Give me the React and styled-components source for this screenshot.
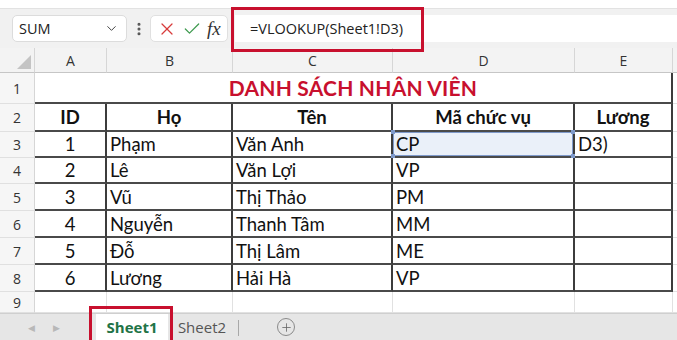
import React from 'react';
import styled, { createGlobalStyle } from 'styled-components';
import { ChevronDown, EllipsisVertical, X, Check, Plus } from 'lucide-react';

const GlobalStyle = createGlobalStyle`
  * { box-sizing: border-box; }
  body {
    margin: 0;
    background: #ffffff;
    font-family: 'Open Sans', 'Noto Sans', sans-serif;
  }
`;

const Page = styled.div`
  position: relative;
  width: 677px;
  height: 340px;
  overflow: hidden;
  background: #ffffff;
`;

const Toolbar = styled.div`
  margin-top: 8px;
  height: 40px;
  background: #f1f1f1;
  border-top: 1px solid #e2e2e2;
  display: flex;
  align-items: center;
  padding-left: 12px;
`;

const NameBox = styled.div`
  width: 115px;
  height: 27px;
  background: #fff;
  border: 1px solid #dcdcdc;
  border-radius: 5px;
  display: flex;
  align-items: center;
  justify-content: space-between;
  padding: 0 7px 0 6px;
  font-size: 14.5px;
  color: #222;
`;

const Dots = styled.div`
  width: 23px;
  display: flex;
  justify-content: center;
  color: #555;
`;

const ActionBox = styled.div`
  width: 78px;
  height: 27px;
  background: #fff;
  border: 1px solid #e0e0e0;
  border-radius: 5px;
  display: flex;
  align-items: center;
  justify-content: space-around;
  padding: 0 4px;
`;

const Fx = styled.span`
  font-family: 'Liberation Serif', 'DejaVu Serif', serif;
  font-style: italic;
  font-size: 19px;
  color: #333;
`;

const FormulaInput = styled.div`
  flex: 1;
  margin-left: 7px;
  height: 27px;
  background: #fff;
  display: flex;
  align-items: center;
  padding-left: 15px;
  font-size: 14.5px;
  color: #222;
`;

const Sheet = styled.div`
  display: grid;
  grid-template-columns: 35px 72px 126px 160px 182px 98px 1fr;
  grid-template-rows: 25px 31px 28px 26px 26px 27px 27px 27px 27px 21px;
  font-family: Lato, 'Liberation Sans', sans-serif;
`;

const Corner = styled.div`
  position: relative;
  background: #f3f3f3;
  border-right: 1px solid #d6d6d6;
  border-bottom: 1px solid #c6c6c6;
  &::after {
    content: '';
    position: absolute;
    right: 3px;
    bottom: 3px;
    width: 0;
    height: 0;
    border-left: 14px solid transparent;
    border-bottom: 14px solid #c4c4c4;
  }
`;

const ColHead = styled.div`
  background: #f3f3f3;
  border-right: 1px solid #d6d6d6;
  border-bottom: 1px solid #c6c6c6;
  display: flex;
  align-items: center;
  justify-content: center;
  font-family: 'Open Sans', sans-serif;
  font-size: 14px;
  color: #333;
`;

const RowHead = styled.div`
  background: #f6f6f6;
  border-right: 1px solid #d6d6d6;
  border-bottom: 1px solid #e0e0e0;
  display: flex;
  align-items: center;
  justify-content: center;
  font-family: 'Open Sans', sans-serif;
  font-size: 14px;
  color: #333;
`;

const Cell = styled.div`
  position: relative;
  display: flex;
  align-items: center;
  justify-content: ${(p) => (p.$center ? 'center' : 'flex-start')};
  padding: 0 3px;
  font-size: ${(p) => (p.$bold ? '18.5px' : '18.5px')};
  font-weight: ${(p) => (p.$bold ? 700 : 400)};
  color: #111;
  white-space: nowrap;
  background: ${(p) => (p.$selected ? '#eaf0f9' : '#fff')};
  border-right: ${(p) => (p.$boxed ? '2px solid #3c3c3c' : '1px solid #e1e1e1')};
  border-bottom: ${(p) => (p.$boxed ? '2px solid #4a4a4a' : '1px solid #e1e1e1')};
  ${(p) => p.$selected && 'box-shadow: inset 0 0 0 1px #7f9acb;'}
`;

const Title = styled.div`
  grid-column: 2 / 7;
  display: flex;
  align-items: center;
  justify-content: center;
  font-size: 21px;
  font-weight: 700;
  color: #c8102e;
  letter-spacing: 0.2px;
  border-right: 2px solid #3c3c3c;
  border-bottom: 2px solid #4a4a4a;
`;

const Handle = styled.span`
  position: absolute;
  width: 4px;
  height: 4px;
  background: #7f9acb;
  ${(p) => (p.$top ? 'top: -2px;' : 'bottom: -2px;')}
  ${(p) => (p.$left ? 'left: -2px;' : 'right: -2px;')}
`;

const TabBar = styled.div`
  height: 27px;
  background: #e6e6e6;
  border-top: 1px solid #cfcfcf;
  display: flex;
  align-items: stretch;
`;

const Arrows = styled.div`
  width: 96px;
  display: flex;
  align-items: center;
  gap: 18px;
  padding-left: 28px;
  font-size: 9px;
  color: #b8b8b8;
`;

const Tab = styled.div`
  width: ${(p) => p.$w}px;
  display: flex;
  align-items: center;
  justify-content: center;
  background: ${(p) => (p.$active ? '#fff' : 'transparent')};
  font-size: 15px;
  font-weight: ${(p) => (p.$active ? 700 : 400)};
  color: ${(p) => (p.$active ? '#217346' : '#555')};
`;

const Separator = styled.div`
  width: 1px;
  margin: 6px 10px 4px 2px;
  background: #a8a8a8;
`;

const AddSheet = styled.div`
  margin-left: 28px;
  display: flex;
  align-items: center;
`;

const AddCircle = styled.span`
  width: 18px;
  height: 18px;
  border-radius: 50%;
  border: 1px solid #8a8a8a;
  display: flex;
  align-items: center;
  justify-content: center;
  color: #666;
`;

const Highlight = styled.div`
  position: absolute;
  border: 3px solid #c8102e;
  pointer-events: none;
`;

const rows = [
  ['1', 'Phạm', 'Văn Anh', 'CP', 'D3)'],
  ['2', 'Lê', 'Văn Lợi', 'VP', ''],
  ['3', 'Vũ', 'Thị Thảo', 'PM', ''],
  ['4', 'Nguyễn', 'Thanh Tâm', 'MM', ''],
  ['5', 'Đỗ', 'Thị Lâm', 'ME', ''],
  ['6', 'Lương', 'Hải Hà', 'VP', ''],
];

const App = () => {
  return (
    <Page>
      <GlobalStyle />
      <Toolbar>
        <NameBox>
          <span>SUM</span>
          <ChevronDown size={15} strokeWidth={1.6} color="#444" />
        </NameBox>
        <Dots>
          <EllipsisVertical size={16} strokeWidth={2.6} />
        </Dots>
        <ActionBox>
          <X size={20} strokeWidth={1.5} color="#d83b3b" />
          <Check size={20} strokeWidth={1.5} color="#3e9a4f" />
          <Fx>fx</Fx>
        </ActionBox>
        <FormulaInput>=VLOOKUP(Sheet1!D3)</FormulaInput>
      </Toolbar>

      <Sheet>
        <Corner />
        {['A', 'B', 'C', 'D', 'E'].map((c) => (
          <ColHead key={c}>{c}</ColHead>
        ))}
        <ColHead />

        <RowHead>1</RowHead>
        <Title>DANH SÁCH NHÂN VIÊN</Title>
        <Cell />

        <RowHead>2</RowHead>
        <Cell $boxed $bold $center>ID</Cell>
        <Cell $boxed $bold $center>Họ</Cell>
        <Cell $boxed $bold $center>Tên</Cell>
        <Cell $boxed $bold $center>Mã chức vụ</Cell>
        <Cell $boxed $bold $center>Lương</Cell>
        <Cell />

        {rows.map((r, i) => (
          <React.Fragment key={r[0]}>
            <RowHead>{i + 3}</RowHead>
            <Cell $boxed $center>{r[0]}</Cell>
            <Cell $boxed>{r[1]}</Cell>
            <Cell $boxed>{r[2]}</Cell>
            <Cell $boxed $selected={i === 0}>
              {r[3]}
              {i === 0 && (
                <>
                  <Handle $top $left />
                  <Handle $top />
                  <Handle $left />
                  <Handle />
                </>
              )}
            </Cell>
            <Cell $boxed>{r[4]}</Cell>
            <Cell />
          </React.Fragment>
        ))}

        <RowHead>9</RowHead>
        <Cell />
        <Cell />
        <Cell />
        <Cell />
        <Cell />
        <Cell />
      </Sheet>

      <TabBar>
        <Arrows>
          <span>◀</span>
          <span>▶</span>
        </Arrows>
        <Tab $active $w={72}>Sheet1</Tab>
        <Tab $w={68}>Sheet2</Tab>
        <Separator />
        <AddSheet>
          <AddCircle>
            <Plus size={13} strokeWidth={1.5} />
          </AddCircle>
        </AddSheet>
      </TabBar>

      <Highlight style={{ left: 231, top: 7, width: 193, height: 45 }} />
      <Highlight style={{ left: 89, top: 306, width: 84, height: 38 }} />
    </Page>
  );
};

export default App;
